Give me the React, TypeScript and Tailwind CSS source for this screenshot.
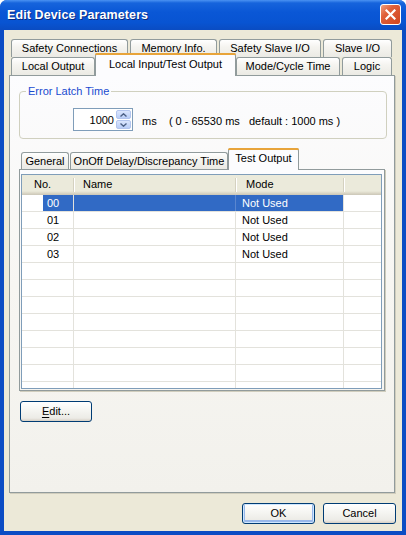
import React from "react";

type TabProps = { label: string; w: string; selected?: boolean; small?: boolean };

function Tab({ label, w, selected }: TabProps) {
  if (selected) {
    return (
      <div
        className={`${w} relative z-10 -mb-[1px] flex flex-col rounded-t-[3px] border border-b-0 border-[#919b9c] bg-[#fcfcfe]`}
      >
        <div className="h-[2px] -mx-[1px] -mt-[1px] rounded-t-[3px] bg-[#e8a43a]" />
        <div className="flex-1 flex items-center justify-center pb-[3px]">{label}</div>
      </div>
    );
  }
  return (
    <div
      className={`${w} flex items-center justify-center rounded-t-[3px] border border-b-0 border-[#919b9c] bg-[linear-gradient(180deg,#ffffff_0%,#f5f4f0_40%,#ebeae4_100%)]`}
    >
      {label}
    </div>
  );
}

function XPButton({ children, w, def }: { children: React.ReactNode; w: string; def?: boolean }) {
  return (
    <div
      className={`${w} h-[21px] rounded-[3px] border border-[#003c74] flex items-center justify-center bg-[linear-gradient(180deg,#ffffff_0%,#f4f4f0_50%,#ecebe6_85%,#d6d0c5_100%)] ${
        def ? "shadow-[inset_0_0_0_1px_#cee7ff,inset_0_-1px_0_2px_#98b8ea]" : ""
      }`}
    >
      {children}
    </div>
  );
}

const rows: { no: string; mode: string }[] = [
  { no: "00", mode: "Not Used" },
  { no: "01", mode: "Not Used" },
  { no: "02", mode: "Not Used" },
  { no: "03", mode: "Not Used" },
  { no: "", mode: "" },
  { no: "", mode: "" },
  { no: "", mode: "" },
  { no: "", mode: "" },
  { no: "", mode: "" },
  { no: "", mode: "" },
  { no: "", mode: "" },
  { no: "", mode: "" },
];

export default function App() {
  return (
    <div className="w-[406px] h-[535px] flex flex-col overflow-hidden rounded-t-[7px] bg-[#0b4cc4] font-['Liberation_Sans',Arial,sans-serif] text-[11px] text-black leading-none">
      {/* Title bar */}
      <div className="h-[30px] shrink-0 flex items-center justify-between pl-[7px] pr-[5px] bg-[linear-gradient(180deg,#4a92f2_0%,#1664dc_10%,#0a57d6_40%,#0854d2_75%,#0a4cc2_100%)]">
        <span className="text-white font-bold text-[12.5px] tracking-[0.1px] [text-shadow:1px_1px_0_#0a2a80] pt-[1px]">
          Edit Device Parameters
        </span>
        <div className="w-[21px] h-[21px] mt-[-1px] rounded-[3px] border border-white flex items-center justify-center bg-[linear-gradient(135deg,#f0a080_0%,#e0603a_35%,#d0441f_100%)]">
          <svg width="11" height="11" viewBox="0 0 11 11">
            <path d="M1.5 1.5 L9.5 9.5 M9.5 1.5 L1.5 9.5" stroke="white" strokeWidth="2.2" strokeLinecap="square" />
          </svg>
        </div>
      </div>

      {/* Client */}
      <div className="flex-1 mx-[4px] mb-[4px] bg-[#ece9d8] flex flex-col pt-[9px]">
        {/* Tab rows */}
        <div className="ml-[7px] flex gap-[2px] h-[18px]">
          <Tab label="Safety Connections" w="w-[117px]" />
          <Tab label="Memory Info." w="w-[87px]" />
          <Tab label="Safety Slave I/O" w="w-[102px]" />
          <Tab label="Slave I/O" w="w-[69px]" />
        </div>
        <div className="ml-[7px] flex items-end h-[18px]">
          <Tab label="Local Output" w="w-[84px] h-[18px]" />
          <Tab label="Local Input/Test Output" w="w-[141px] h-[23px]" selected />
          <Tab label="Mode/Cycle Time" w="w-[104px] h-[18px]" />
          <div className="w-[2px]" />
          <Tab label="Logic" w="w-[50px] h-[18px]" />
        </div>

        {/* Main panel */}
        <div className="ml-[5px] w-[386px] h-[418px] border border-[#919b9c] bg-[linear-gradient(180deg,#fcfcfe_0%,#f7f6f2_50%,#f2f1ec_100%)] flex flex-col shadow-[1px_1px_0_#d0cdbd]">
          <fieldset className="ml-[9px] mt-[8px] w-[368px] rounded-[4px] border border-[#d0d0bf] pb-[7px]">
            <legend className="ml-[6px] px-[2px] text-[#1a4bd0] text-[11px] leading-[14px]">Error Latch Time</legend>
            <div className="flex items-center mt-[10px] ml-[53px]">
              <div className="w-[60px] h-[23px] border border-[#7f9db9] bg-white flex items-center justify-end">
                <span className="mr-[1px] pt-[1px]">1000</span>
                <div className="flex flex-col gap-[1px] p-[1px] h-full">
                  <div className="w-[15px] flex-1 rounded-[2px] bg-[linear-gradient(180deg,#dbe6fd,#b9cdf7)] border border-[#b3c5ee] flex items-center justify-center">
                    <svg width="7" height="4" viewBox="0 0 7 4">
                      <path d="M0.5 3.5 L3.5 0.8 L6.5 3.5" fill="none" stroke="#4d6185" strokeWidth="1.4" />
                    </svg>
                  </div>
                  <div className="w-[15px] flex-1 rounded-[2px] bg-[linear-gradient(180deg,#dbe6fd,#b9cdf7)] border border-[#b3c5ee] flex items-center justify-center">
                    <svg width="7" height="4" viewBox="0 0 7 4">
                      <path d="M0.5 0.5 L3.5 3.2 L6.5 0.5" fill="none" stroke="#4d6185" strokeWidth="1.4" />
                    </svg>
                  </div>
                </div>
              </div>
              <span className="ml-[9px] mt-[4px] whitespace-pre">{"ms    ( 0 - 65530 ms   default : 1000 ms )"}</span>
            </div>
          </fieldset>

          {/* Inner tabs */}
          <div className="ml-[11px] mt-[13px] flex items-end h-[17px]">
            <Tab label="General" w="w-[48px] h-[17px]" />
            <div className="w-[1px]" />
            <Tab label="OnOff Delay/Discrepancy Time" w="w-[158px] h-[17px]" />
            <Tab label="Test Output" w="w-[71px] h-[22px]" selected />
          </div>

          {/* Inner panel */}
          <div className="ml-[9px] w-[366px] h-[222px] border border-[#919b9c] bg-[linear-gradient(180deg,#fcfcfe,#f6f5f1)] shadow-[1px_1px_0_#d0cdbd] pt-[4px] pl-[1px]">
            <div className="w-[361px] h-[215px] border border-[#7f9db9] bg-white overflow-hidden">
              {/* Header */}
              <div className="h-[20px] flex bg-[linear-gradient(180deg,#ebeadb_0%,#ebeadb_80%,#e2dfcf_86%,#d6d2c2_93%,#cbc7b8_100%)]">
                <div className="w-[52px] flex items-center justify-between pb-[1px]">
                  <span className="pl-[12px]">No.</span>
                  <div className="w-[1px] h-[14px] bg-[#d4d1c0] shadow-[1px_0_0_#ffffff]" />
                </div>
                <div className="w-[162px] flex items-center justify-between pb-[1px]">
                  <span className="pl-[9px]">Name</span>
                  <div className="w-[1px] h-[14px] bg-[#d4d1c0] shadow-[1px_0_0_#ffffff]" />
                </div>
                <div className="w-[108px] flex items-center justify-between pb-[1px]">
                  <span className="pl-[10px]">Mode</span>
                  <div className="w-[1px] h-[14px] bg-[#d4d1c0] shadow-[1px_0_0_#ffffff]" />
                </div>
                <div className="flex-1" />
              </div>
              {/* Rows */}
              {rows.map((r, i) => {
                const sel = i === 0;
                return (
                  <div key={i} className="h-[17px] flex border-b border-[#e3e2dc] shrink-0">
                    <div className="w-[52px] flex border-r border-[#e3e2dc]">
                      <div className="w-[21px]" />
                      <div className={`flex-1 flex items-center pl-[4px] ${sel ? "bg-[#316ac5] text-white" : ""}`}>{r.no}</div>
                    </div>
                    <div className={`w-[162px] border-r ${sel ? "bg-[#316ac5] border-[#5a86cf]" : "border-[#e3e2dc]"}`} />
                    <div
                      className={`w-[108px] flex items-center pl-[6px] border-r border-[#e3e2dc] ${
                        sel ? "bg-[#316ac5] text-white" : ""
                      }`}
                    >
                      {r.mode}
                    </div>
                    <div className="flex-1" />
                  </div>
                );
              })}
            </div>
          </div>

          <div className="ml-[10px] mt-[10px]">
            <XPButton w="w-[72px]">
              <span>
                <span className="underline underline-offset-[2px]">E</span>dit...
              </span>
            </XPButton>
          </div>
        </div>

        {/* Bottom buttons */}
        <div className="mt-[10px] mr-[6px] flex justify-end gap-[8px]">
          <XPButton w="w-[73px]" def>
            OK
          </XPButton>
          <XPButton w="w-[73px]">Cancel</XPButton>
        </div>
      </div>
    </div>
  );
}
